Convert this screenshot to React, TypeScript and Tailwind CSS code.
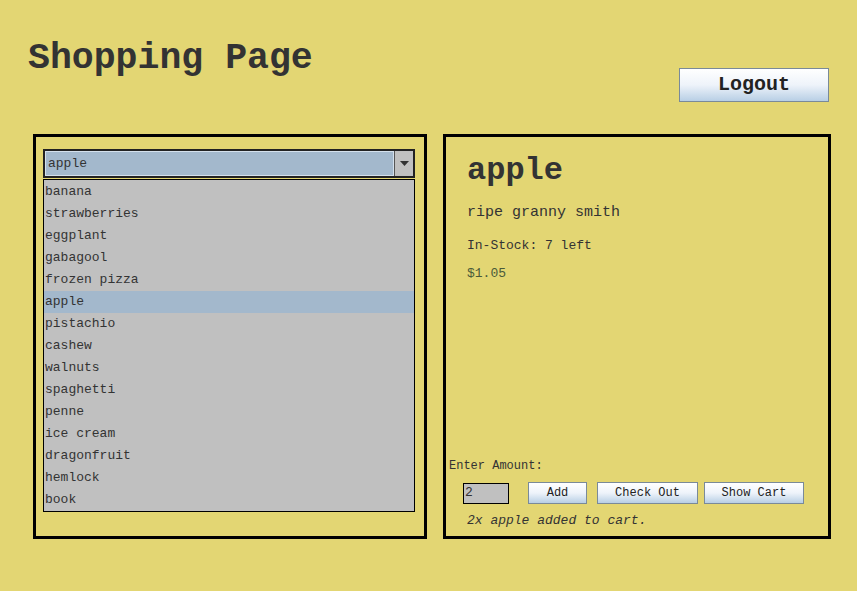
import React from 'react'

const items = [
  'banana',
  'strawberries',
  'eggplant',
  'gabagool',
  'frozen pizza',
  'apple',
  'pistachio',
  'cashew',
  'walnuts',
  'spaghetti',
  'penne',
  'ice cream',
  'dragonfruit',
  'hemlock',
  'book',
]

const mono = "font-['Courier_New','Liberation_Mono',monospace]"

function SwingButton({ label, className }: { label: string; className: string }) {
  return (
    <button
      className={`border border-[#7a8a99] bg-gradient-to-b from-[#ffffff] via-[#eef3fa] to-[#b8cfe5] text-[#222] ${className}`}
    >
      {label}
    </button>
  )
}

export default function App() {
  const selected = 'apple'

  return (
    <div className={`w-[857px] h-[591px] bg-[#e3d673] text-[#333] ${mono} overflow-hidden`}>
      {/* Header */}
      <div className="flex justify-between items-start pt-[39px] pl-[28px] pr-[28px]">
        <h1 className="text-[36.5px] leading-[40px] font-bold">Shopping Page</h1>
        <SwingButton label="Logout" className="mt-[29px] w-[150px] h-[34px] text-[20px] font-bold" />
      </div>

      {/* Panels */}
      <div className="flex gap-[16px] mt-[32px] pl-[33px]">
        {/* Left: product picker */}
        <div className="w-[394px] h-[405px] border-[3px] border-black pt-[12px] pl-[7px]">
          <div className="w-[372px] h-[29px] flex border-2 border-[#222] bg-[#c0c0c0]">
            <div className="flex-1 flex items-center bg-[#a3b8cc] border border-[#d4e0ec] pl-[2px] text-[13px]">
              {selected}
            </div>
            <div className="w-[19px] flex items-center justify-center border-l border-[#555]">
              <svg width="9" height="5" viewBox="0 0 9 5">
                <path d="M0 0 L9 0 L4.5 5 Z" fill="#333" />
              </svg>
            </div>
          </div>
          <div className="w-[372px] mt-[1px] border border-black bg-[#c0c0c0] pt-[1px]">
            {items.map((item) => (
              <div
                key={item}
                className={`h-[22px] flex items-center pl-[1px] text-[13px] ${
                  item === selected ? 'bg-[#a3b8cc]' : ''
                }`}
              >
                {item}
              </div>
            ))}
          </div>
        </div>

        {/* Right: product detail */}
        <div className="w-[388px] h-[405px] border-[3px] border-black flex flex-col justify-between">
          <div className="pl-[21px] pt-[15px]">
            <h2 className="text-[32px] leading-[38px] font-bold">apple</h2>
            <p className="mt-[14px] text-[15px] leading-[18px]">ripe granny smith</p>
            <p className="mt-[16px] text-[13px] leading-[16px]">In-Stock: 7 left</p>
            <p className="mt-[12px] text-[13px] leading-[16px] text-[#4a5a3a]">$1.05</p>
          </div>

          <div className="pb-[7px]">
            <p className="pl-[3px] text-[12px] leading-[14px]">Enter Amount:</p>
            <div className="flex items-center mt-[9px] pl-[17px]">
              <div className="w-[46px] h-[21px] border border-black bg-[#c0c0c0] flex items-center text-[13px] pl-[1px]">
                2
              </div>
              <SwingButton label="Add" className="ml-[19px] w-[59px] h-[22px] text-[12px]" />
              <SwingButton label="Check Out" className="ml-[10px] w-[101px] h-[22px] text-[12px]" />
              <SwingButton label="Show Cart" className="ml-[6px] w-[100px] h-[22px] text-[12px]" />
            </div>
            <p className="mt-[9px] pl-[21px] text-[13px] leading-[16px] italic">2x apple added to cart.</p>
          </div>
        </div>
      </div>
    </div>
  )
}
